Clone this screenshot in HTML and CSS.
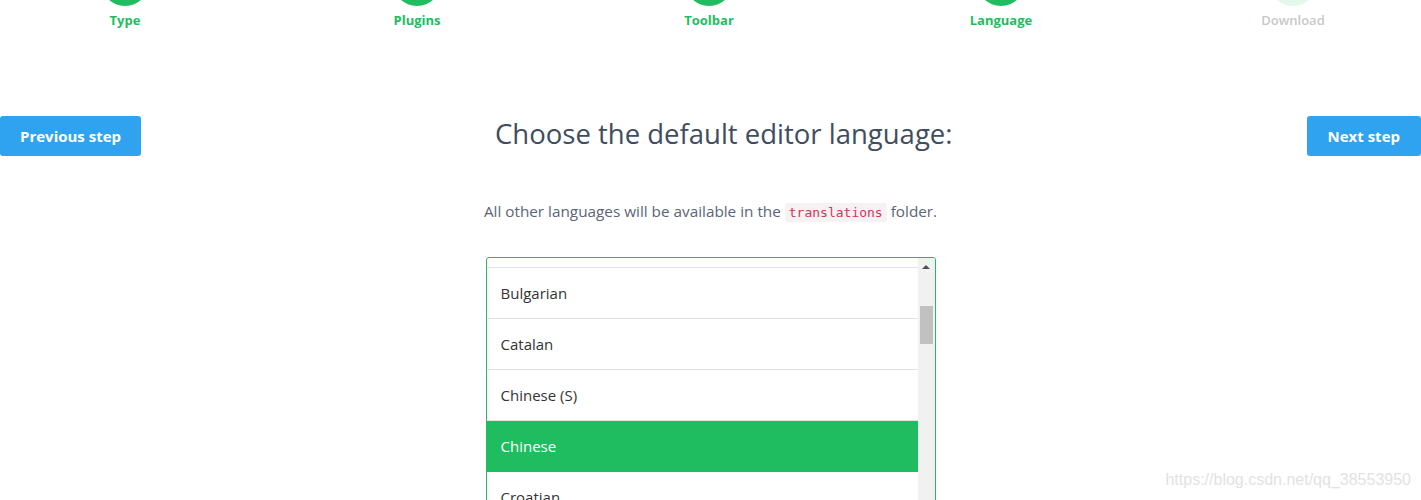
FILE: index.html
```html
<!DOCTYPE html>
<html lang="en">
<head>
<meta charset="utf-8">
<title>Language</title>
<link rel="stylesheet" href="styles.css">
</head>
<body>
<div class="steps">
  <div class="step done"><span class="dot"></span><span class="label">Type</span></div>
  <div class="step done"><span class="dot"></span><span class="label">Plugins</span></div>
  <div class="step done"><span class="dot"></span><span class="label">Toolbar</span></div>
  <div class="step done"><span class="dot"></span><span class="label">Language</span></div>
  <div class="step todo"><span class="dot"></span><span class="label">Download</span></div>
</div>

<div class="nav">
  <button class="btn">Previous step</button>
  <h1 class="title">Choose the default editor language:</h1>
  <button class="btn">Next step</button>
</div>

<p class="note">All other languages will be available in the <code class="code">translations</code> folder.</p>

<div class="listbox">
  <div class="list-viewport">
    <ul class="list">
      <li class="item">Bosnian</li>
      <li class="item">Bulgarian</li>
      <li class="item">Catalan</li>
      <li class="item">Chinese (S)</li>
      <li class="item selected">Chinese</li>
      <li class="item">Croatian</li>
      <li class="item">Czech</li>
    </ul>
  </div>
  <div class="scrollbar">
    <span class="arrow-up"></span>
    <span class="thumb"></span>
  </div>
</div>

<div class="watermark">https://blog.csdn.net/qq_38553950</div>
</body>
</html>
```

FILE: styles.css
```css
html, body {
  margin: 0;
  padding: 0;
  background: #ffffff;
  overflow: hidden;
}
body {
  font-family: "Open Sans", "Lato", sans-serif;
  color: #333;
  height: 500px;
  position: relative;
}
.steps {
  display: flex;
  justify-content: center;
  margin: -42px -18px 0 -21px;
}
.step {
  width: 292px;
  flex: 0 0 292px;
  display: flex;
  flex-direction: column;
  align-items: center;
}
.dot {
  width: 48px;
  height: 48px;
  border-radius: 50%;
  background: #1fbd5f;
}
.step.todo .dot {
  background: #e1f8eb;
}
.label {
  margin-top: 5px;
  font-size: 13px;
  line-height: 18px;
  font-weight: 700;
  color: #1fbd5f;
}
.step.todo .label {
  color: #c8c8c8;
  font-weight: 600;
}
.nav {
  display: flex;
  align-items: center;
  margin-top: 87px;
}
.btn {
  flex: 0 0 auto;
  height: 40px;
  padding: 0 20px;
  border: 0;
  border-radius: 3px;
  background: #2fa3f0;
  color: #fff;
  font-family: inherit;
  font-size: 15px;
  font-weight: 700;
}
.btn + .title + .btn {
  padding: 0 21px;
}
.title {
  flex: 1;
  margin: 0 0 4px;
  line-height: 34px;
  text-align: center;
  font-size: 27.5px;
  font-weight: 400;
  color: #404d60;
  letter-spacing: 0;
}
.note {
  margin: 45px 0 0;
  text-align: center;
  font-size: 15.3px;
  line-height: 20px;
  color: #5b6577;
}
.code {
  font-family: "DejaVu Sans Mono", "Liberation Mono", monospace;
  font-size: 13px;
  color: #d4345a;
  background: #f6f1f3;
  padding: 2px 4px;
  border-radius: 3px;
}
.listbox {
  width: 448px;
  height: 300px;
  margin: 34px auto 0;
  border: 1px solid #1fbd5f;
  border-radius: 3px;
  display: flex;
  overflow: hidden;
}
.list-viewport {
  flex: 1;
  overflow: hidden;
}
.list {
  list-style: none;
  margin: -41px 0 0;
  padding: 0;
}
.item {
  height: 50px;
  line-height: 50px;
  padding-left: 14px;
  font-size: 15px;
  color: #333;
  border-bottom: 1px solid #e3e3e3;
}
.item.selected {
  background: #1fbd5f;
  color: #fff;
  border-bottom-color: #1fbd5f;
}
.scrollbar {
  flex: 0 0 17px;
  background: #f1f1f1;
  display: flex;
  flex-direction: column;
  align-items: center;
}
.arrow-up {
  margin-top: 7px;
  width: 0;
  height: 0;
  border-left: 4px solid transparent;
  border-right: 4px solid transparent;
  border-bottom: 4px solid #505050;
}
.thumb {
  margin-top: 37px;
  width: 13px;
  height: 38px;
  background: #c1c1c1;
}
.watermark {
  position: absolute;
  right: 10px;
  top: 471px;
  font-family: "Liberation Sans", Arial, sans-serif;
  font-size: 16px;
  color: #e2e2e2;
}
```
